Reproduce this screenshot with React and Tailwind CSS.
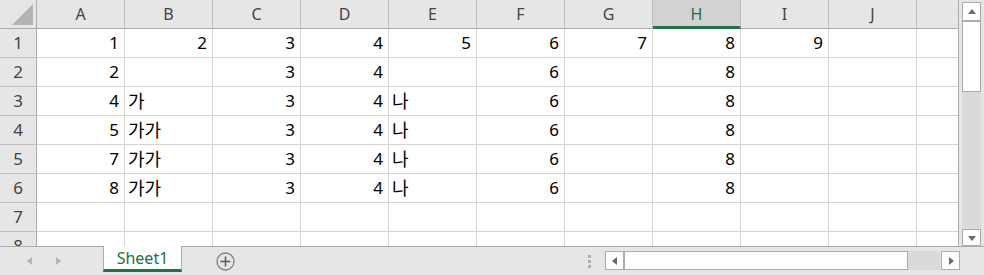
import React from "react";

const COLS = ["A", "B", "C", "D", "E", "F", "G", "H", "I", "J"];

const DATA = [
    [1, 2, 3, 4, 5, 6, 7, 8, 9, null],
    [2, null, 3, 4, null, 6, null, 8, null, null],
    [4, "가", 3, 4, "나", 6, null, 8, null, null],
    [5, "가가", 3, 4, "나", 6, null, 8, null, null],
    [7, "가가", 3, 4, "나", 6, null, 8, null, null],
    [8, "가가", 3, 4, "나", 6, null, 8, null, null],
    Array(10).fill(null),
    Array(10).fill(null),
];

const font = { fontFamily: '"Noto Sans", "Noto Sans CJK KR", sans-serif' };

const Cell = ({ value }) => {
    const isNum = typeof value === "number";
    return (
        <div
            className={
                "h-[29px] border-r border-b border-[#d4d4d4] bg-white flex items-center text-black whitespace-nowrap overflow-hidden " +
                (isNum ? "justify-end pr-[5px] text-[17px]" : "justify-start pl-[3px] text-[18px]")
            }
        >
            {value}
        </div>
    );
};

const Arrow = ({ dir, className }) => (
    <svg width="8" height="8" viewBox="0 0 8 8" className={className}>
        {dir === "up" && <polygon points="0,6 8,6 4,1" fill="#6a6a6a" />}
        {dir === "down" && <polygon points="0,2 8,2 4,7" fill="#6a6a6a" />}
        {dir === "left" && <polygon points="6,0 6,8 1,4" fill="#6a6a6a" />}
        {dir === "right" && <polygon points="2,0 2,8 7,4" fill="#6a6a6a" />}
    </svg>
);

export default function App() {
    return (
        <div className="w-[984px] h-[275px] bg-[#e6e6e6] overflow-hidden select-none" style={font}>
            <div className="flex h-[246px]">
                {/* sheet grid */}
                <div className="w-[959px] h-[246px] overflow-hidden grid grid-cols-[37px_repeat(10,88px)_42px] auto-rows-[29px] border-r border-[#ababab]">
                    {/* header row */}
                    <div className="h-[29px] bg-[#e6e6e6] border-r border-b border-[#ababab] flex items-end justify-end pr-[3px] pb-[3px]">
                        <svg width="21" height="21" viewBox="0 0 21 21">
                            <polygon points="21,0 21,21 0,21" fill="#b4b4b4" />
                        </svg>
                    </div>
                    {COLS.map((c) =>
                        c === "H" ? (
                            <div
                                key={c}
                                className="h-[29px] bg-[#d2d2d2] border-r border-[#bdbdbd] border-b-[3px] border-b-[#217346] flex items-center justify-center pt-[2px] text-[16px] text-[#217346]"
                            >
                                {c}
                            </div>
                        ) : (
                            <div
                                key={c}
                                className="h-[29px] bg-[#e6e6e6] border-r border-b border-[#bdbdbd] border-b-[#ababab] flex items-center justify-center text-[16px] text-[#444444]"
                            >
                                {c}
                            </div>
                        )
                    )}
                    <div className="h-[29px] bg-[#e6e6e6] border-b border-[#ababab] flex items-center text-[16px] text-[#444444] pl-[40px] overflow-hidden">
                        K
                    </div>

                    {DATA.map((row, r) => (
                        <React.Fragment key={r}>
                            <div className="h-[29px] bg-[#e6e6e6] border-r border-[#ababab] border-b border-b-[#bdbdbd] flex items-center justify-center text-[17px] text-[#444444]">
                                {r + 1}
                            </div>
                            {row.map((v, i) => (
                                <Cell key={i} value={v} />
                            ))}
                            <div className="h-[29px] bg-white border-b border-[#d4d4d4]" />
                        </React.Fragment>
                    ))}
                </div>

                {/* vertical scrollbar */}
                <div className="w-[25px] flex flex-col pl-[3px] pt-[2px] pr-[3px]">
                    <div className="h-[19px] bg-white border border-[#ababab] flex items-center justify-center">
                        <Arrow dir="up" />
                    </div>
                    <div className="flex-1 bg-[#dadada] flex flex-col">
                        <div className="h-[71px] bg-white border border-[#ababab]" />
                    </div>
                    <div className="h-[17px] bg-white border border-[#ababab] flex items-center justify-center">
                        <Arrow dir="down" />
                    </div>
                </div>
            </div>

            {/* sheet tabs bar */}
            <div className="h-[29px] border-t border-[#ababab] flex items-start">
                <div className="w-[103px] h-[28px] flex items-center pl-[26px] gap-[20px] opacity-40">
                    <Arrow dir="left" />
                    <Arrow dir="right" />
                </div>
                <div className="w-[79px] h-[26px] -mt-px bg-white border-l border-r border-[#ababab] border-b-[3px] border-b-[#217346] flex items-center justify-center text-[16px] text-[#217346]">
                    Sheet1
                </div>
                <div className="w-[87px] h-[28px] flex items-center pl-[34px]">
                    <svg width="19" height="19" viewBox="0 0 19 19">
                        <circle cx="9.5" cy="9.5" r="8.5" fill="none" stroke="#808080" strokeWidth="1.3" />
                        <line x1="9.5" y1="4.5" x2="9.5" y2="14.5" stroke="#606060" strokeWidth="1.6" />
                        <line x1="4.5" y1="9.5" x2="14.5" y2="9.5" stroke="#606060" strokeWidth="1.6" />
                    </svg>
                </div>
                <div className="flex-1" />
                <div className="h-[28px] flex flex-col justify-center gap-[2px] mr-[14px]">
                    <div className="w-[3px] h-[3px] bg-[#b0b0b0]" />
                    <div className="w-[3px] h-[3px] bg-[#b0b0b0]" />
                    <div className="w-[3px] h-[3px] bg-[#b0b0b0]" />
                </div>
                <div className="w-[355px] h-[19px] mt-[4px] mr-[24px] flex">
                    <div className="w-[19px] bg-white border border-[#ababab] flex items-center justify-center">
                        <Arrow dir="left" />
                    </div>
                    <div className="flex-1 bg-[#dadada] flex">
                        <div className="w-[284px] bg-white border border-[#ababab]" />
                    </div>
                    <div className="w-[19px] ml-[1px] bg-white border border-[#ababab] flex items-center justify-center">
                        <Arrow dir="right" />
                    </div>
                </div>
            </div>
        </div>
    );
}
